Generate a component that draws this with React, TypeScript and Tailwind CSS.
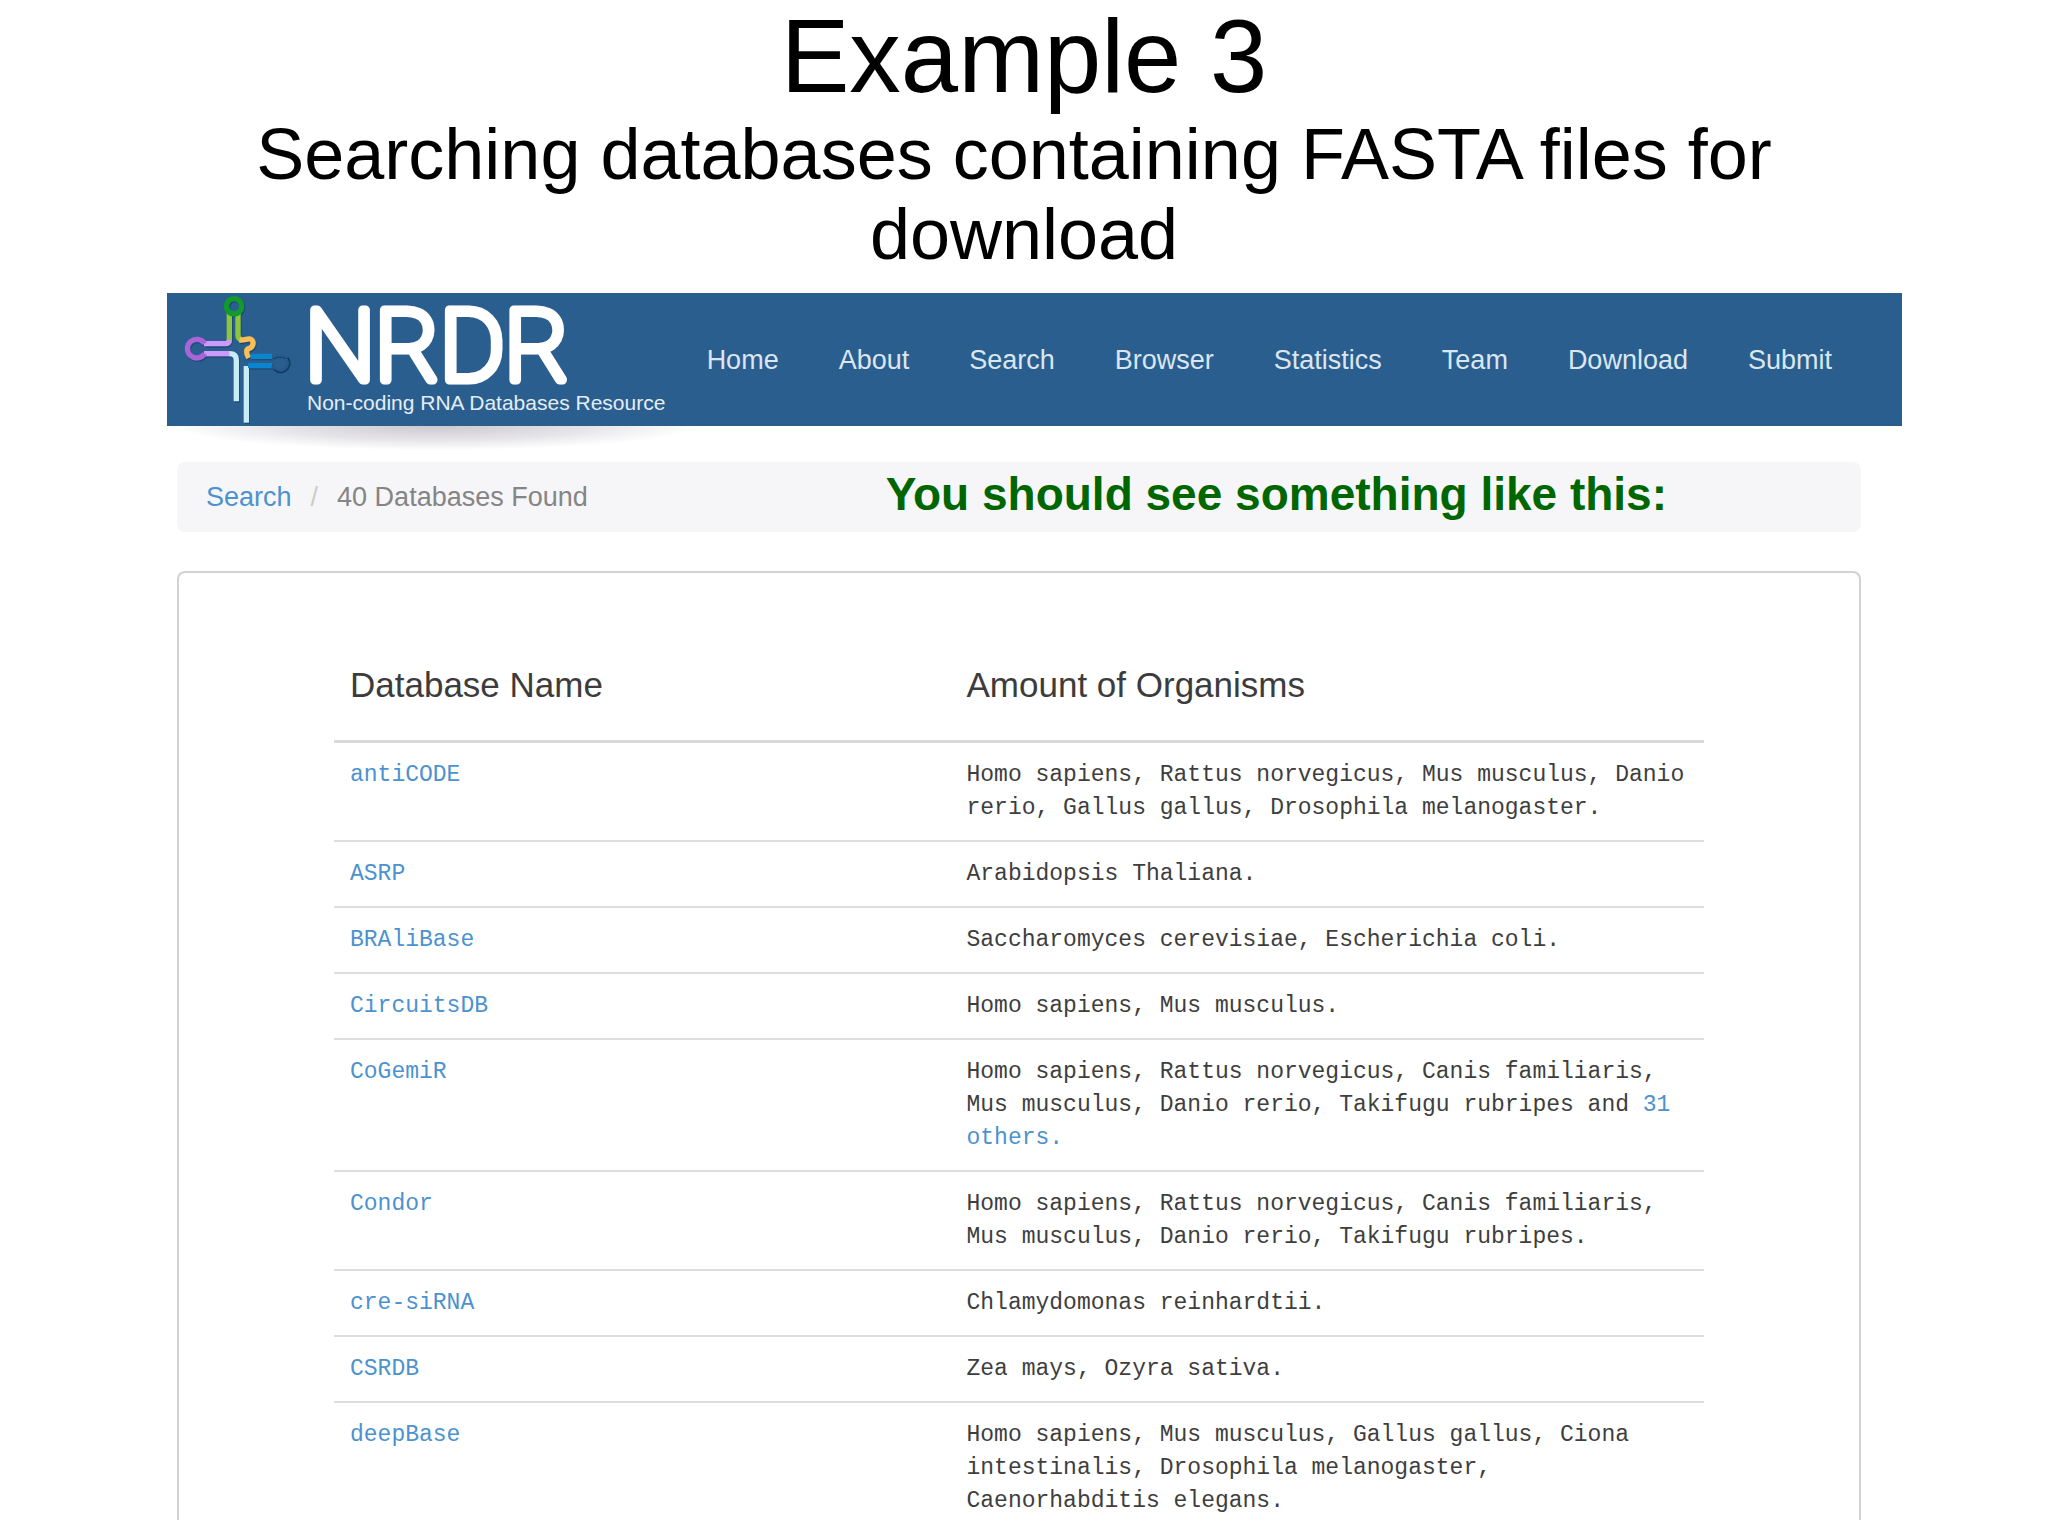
type Database = {
    name: string,
    organisms: string,
    others?: string
};

const links = ["Home", "About", "Search", "Browser", "Statistics", "Team", "Download", "Submit"];

const databases: Database[] = [
    { name: "antiCODE", organisms: "Homo sapiens, Rattus norvegicus, Mus musculus, Danio rerio, Gallus gallus, Drosophila melanogaster." },
    { name: "ASRP", organisms: "Arabidopsis Thaliana." },
    { name: "BRAliBase", organisms: "Saccharomyces cerevisiae, Escherichia coli." },
    { name: "CircuitsDB", organisms: "Homo sapiens, Mus musculus." },
    { name: "CoGemiR", organisms: "Homo sapiens, Rattus norvegicus, Canis familiaris, Mus musculus, Danio rerio, Takifugu rubripes and ", others: "31 others." },
    { name: "Condor", organisms: "Homo sapiens, Rattus norvegicus, Canis familiaris, Mus musculus, Danio rerio, Takifugu rubripes." },
    { name: "cre-siRNA", organisms: "Chlamydomonas reinhardtii." },
    { name: "CSRDB", organisms: "Zea mays, Ozyra sativa." },
    { name: "deepBase", organisms: "Homo sapiens, Mus musculus, Gallus gallus, Ciona intestinalis, Drosophila melanogaster, Caenorhabditis elegans." },
];

// tRNA clover leaf
const RnaIcon = () => (
    <svg viewBox="60 39 348 399" className="w-[116px] h-[133px] shrink-0" fill="none" aria-hidden="true">
        <g stroke="#123a5e" strokeOpacity="0.5" strokeWidth="16" transform="translate(3 4)">
            <circle cx="222" cy="79" r="23" />
            <path d="M133 191A28 28 0 1 0 133 221" />
            <path d="M134 191H194Q208 191 208 176V100M234 100V166Q234 178 246 180M134 221H210Q229 221 229 240V364M259 428V257M272 229H334M264 257H336" />
            <path d="M238 180C254 183 264 173 273 178C284 186 279 202 268 205C256 208 259 222 266 234" />
        </g>
        <path d="M208 98V176Q208 188 202 188" stroke="#8cc63f" strokeWidth="16" />
        <path d="M234 98V164Q234 178 246 180" stroke="#8cc63f" strokeWidth="16" />
        <circle cx="222" cy="79" r="23" stroke="#129a2c" strokeWidth="16" />
        <path d="M132 191H196Q207 191 208 180" stroke="#cc99ff" strokeWidth="16" />
        <path d="M132 221H210" stroke="#cc99ff" strokeWidth="16" />
        <path d="M134 191A28 28 0 1 0 134 221" stroke="#a865d6" strokeWidth="16" />
        <path d="M208 221Q229 221 229 240V364" stroke="#c8ecf5" strokeWidth="16" />
        <path d="M259 428V258" stroke="#c8ecf5" strokeWidth="16" />
        <path d="M238 180C254 183 264 173 273 178C284 186 279 202 268 205C256 208 259 222 266 234" stroke="#f9bf55" strokeWidth="16" />
        <path d="M272 229H336M264 257H336" stroke="#0a86d1" strokeWidth="16" />
        {/* open loop, only its shaded edges stand out from the bar */}
        <path d="M336 231C352 226 370 224 380 236C390 254 376 272 360 272C350 271 342 265 336 258" stroke="#275a8c" strokeWidth="9" />
        <path d="M341 238C350 231 364 230 376 236" stroke="#16446f" strokeWidth="4" />
        <path d="M383 233C396 248 388 270 368 277C358 279 349 275 341 268" stroke="#123c63" strokeWidth="5" />
    </svg>
);

const Brand = () => (
    <a href="#home" className="flex">
        <RnaIcon />
        <span className="ml-[11px] flex flex-col">
            <svg viewBox="0 0 270 98" className="w-[270px] h-[98px] overflow-visible" role="img" aria-label="NRDR">
                <text x="-2" y="87" fontSize="99" stroke="#fff" strokeWidth="9" strokeLinejoin="round" className="fill-white font-['Roboto'] font-thin">NRDR</text>
            </svg>
            <span className="text-[21px] leading-6 text-[#e4edf5]">Non-coding RNA Databases Resource</span>
        </span>
    </a>
);

const Navbar = () => (
    <header className="flex items-center h-[133px] pl-[13px] pr-[70px] bg-[#2a5e8f]">
        <Brand />
        <nav className="ml-auto flex gap-15 text-[27px] leading-8 text-[#dbe6f0]">
            {links.map((link) => <a key={link} href={`#${link.toLowerCase()}`}>{link}</a>)}
        </nav>
    </header>
);

const DatabaseTable = () => (
    <table className="w-full table-fixed border-separate border-spacing-0 text-left">
        <thead>
            <tr className="text-[35px] leading-10 text-[#3c3c3c]">
                <th className="w-[45%] px-4 pt-3 pb-[35px] font-normal border-b-3 border-[#d9d9dc]">Database Name</th>
                <th className="px-4 pt-3 pb-[35px] font-normal border-b-3 border-[#d9d9dc]">Amount of Organisms</th>
            </tr>
        </thead>
        <tbody className="font-['Liberation_Mono',monospace] text-[23px] leading-[33px] text-[#3e3e3e]">
            {databases.map(({ name, organisms, others }) => (
                <tr key={name} className="group align-top">
                    <td className="px-4 pt-4 pb-[15px] border-b-2 border-[#dddde0] group-last:border-0 group-last:pb-[2px]">
                        <a href={`#${name}`} className="text-[#4c92cf]">{name}</a>
                    </td>
                    <td className="px-4 pt-4 pb-[15px] border-b-2 border-[#dddde0] group-last:border-0 group-last:pb-[2px]">
                        {organisms}
                        {others && <a href={`#${name}-others`} className="text-[#4c92cf]">{others}</a>}
                    </td>
                </tr>
            ))}
        </tbody>
    </table>
);

export default function App() {
    return (
        <div className="bg-white pb-4 font-['Liberation_Sans',Arial,sans-serif]">
            <div className="text-center text-black">
                <h1 className="text-[103px] leading-[114px]">Example 3</h1>
                <h2 className="text-[72px] leading-20">
                    Searching databases containing FASTA files for&nbsp;<br />download
                </h2>
            </div>

            <div className="mt-[19px] ml-[167px] mr-[146px]">
                <Navbar />
                {/* soft shadow under the logo */}
                <div className="h-9 ml-2 w-[520px] bg-[radial-gradient(50%_24px_at_top,#cbc9cf,#dcdadfb3_60%,#ffffff00)]" />

                <main className="ml-[10px] mr-[41px]">
                    <div className="flex items-center h-[70px] pl-[29px] pr-[194px] rounded-lg bg-[#f6f6f8]">
                        <nav className="flex gap-[19px] text-[27px] leading-8">
                            <a href="#search" className="text-[#4c92cf]">Search</a>
                            <span className="text-[#cccccc]">/</span>
                            <span className="text-[#858585]">40 Databases Found</span>
                        </nav>
                        <p className="ml-auto text-[46px] leading-[60px] pb-[6px] font-bold text-[#006600]">You should see something like this:</p>
                    </div>

                    <section className="mt-[39px] pt-20 px-[155px] border-2 border-b-0 border-[#d2d2d5] rounded-t-lg">
                        <DatabaseTable />
                    </section>
                </main>
            </div>
        </div>
    );
}
